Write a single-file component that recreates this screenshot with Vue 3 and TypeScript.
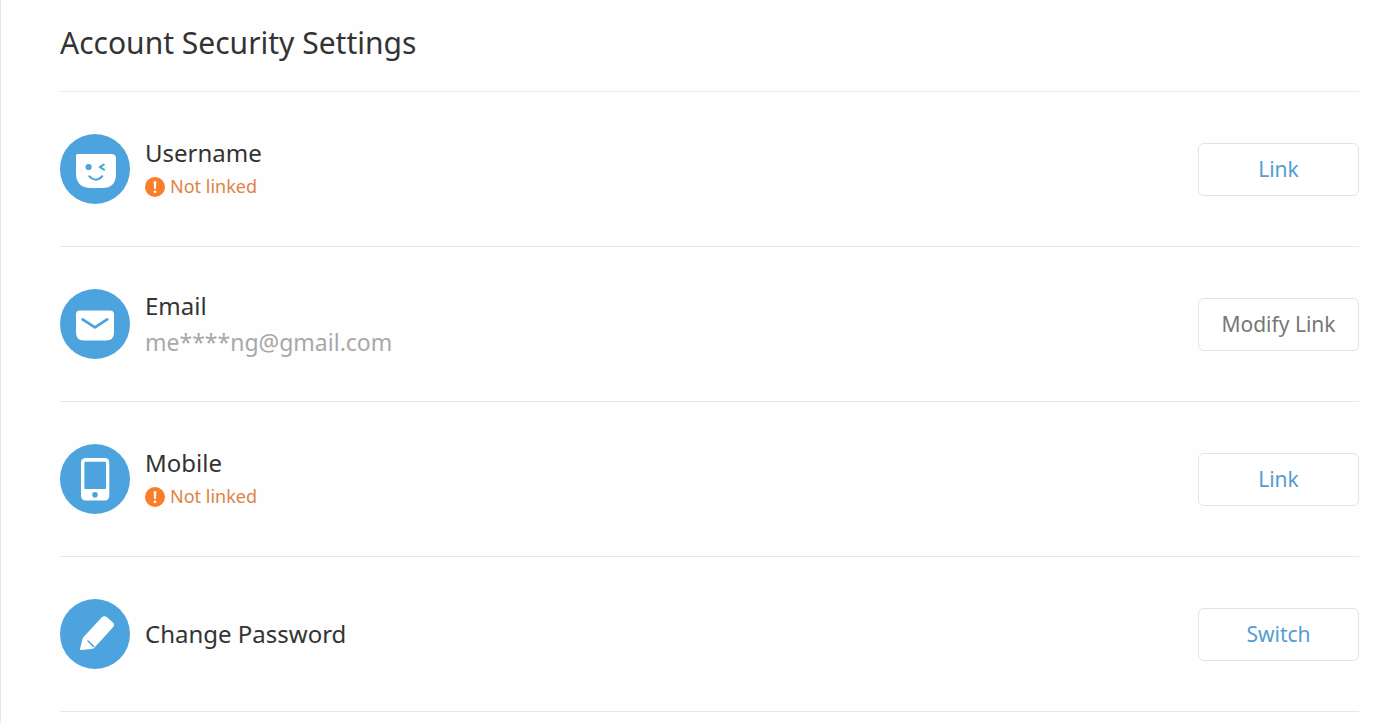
<script setup lang="ts">
type IconName = 'face' | 'mail' | 'phone' | 'pencil'

interface SecurityItem {
  icon: IconName
  title: string
  warning?: string
  detail?: string
  action: string
  muted?: boolean
}

const items: SecurityItem[] = [
  { icon: 'face', title: 'Username', warning: 'Not linked', action: 'Link' },
  { icon: 'mail', title: 'Email', detail: 'me****ng@gmail.com', action: 'Modify Link', muted: true },
  { icon: 'phone', title: 'Mobile', warning: 'Not linked', action: 'Link' },
  { icon: 'pencil', title: 'Change Password', action: 'Switch' },
]
</script>

<template>
  <main class="panel">
    <h1 class="heading">Account Security Settings</h1>
    <ul class="list">
      <li v-for="item in items" :key="item.title" class="row">
        <svg class="icon" viewBox="0 0 70 70" aria-hidden="true">
          <circle class="blue" cx="35" cy="35" r="35" />
          <template v-if="item.icon === 'face'">
            <path class="white" d="M17.5 20H51.5Q56 20 56 24.5V40Q56 54 42 54H31Q16 54 16 39V21.5Q16 20 17.5 20Z" />
            <circle class="blue" cx="28.6" cy="33" r="3.1" />
            <path class="line face-line" d="M43.8 30.6L39.8 33.1L44 35.7M29.2 42.2Q35.6 49.2 42.2 42.2" />
          </template>
          <template v-else-if="item.icon === 'mail'">
            <path class="white" d="M20 21.5H50Q54 21.5 54 25.5V43.5Q54 51.5 46 51.5H24Q16 51.5 16 43.5V25.5Q16 21.5 20 21.5Z" />
            <path class="line mail-line" d="M22.6 30.4L34.9 38.4L47.2 30.4" />
          </template>
          <template v-else-if="item.icon === 'phone'">
            <rect class="white" x="21" y="14" width="28.3" height="42.5" rx="4.5" />
            <rect class="blue" x="24.4" y="17.8" width="21.6" height="27.2" rx="1" />
            <circle class="blue" cx="35" cy="50.8" r="2.8" />
          </template>
          <template v-else>
            <path class="white" d="M20.8 51Q19.8 51 20 50L22.4 40.2Q22.7 39 23.6 38.1L41.6 18.6Q44.4 16 47.2 18.4L53 23.6Q55.2 26 52.8 28.6L34.6 48.6Q33.4 49.8 31.8 50Z" />
            <path class="line pencil-line" d="M28 42L33.6 47.4" />
          </template>
        </svg>
        <div class="info" :class="{ roomy: item.detail }">
          <h2 class="title">{{ item.title }}</h2>
          <p v-if="item.warning" class="warning">
            <svg class="alert" viewBox="0 0 20 20" aria-hidden="true">
              <circle class="orange" cx="10" cy="10" r="10" />
              <path class="white" d="M8.6 4.2H11.4L10.9 12H9.1Z" />
              <circle class="white" cx="10" cy="14.8" r="1.4" />
            </svg>
            <span>{{ item.warning }}</span>
          </p>
          <p v-if="item.detail" class="detail">{{ item.detail }}</p>
        </div>
        <button type="button" class="action" :class="{ muted: item.muted }">{{ item.action }}</button>
      </li>
    </ul>
  </main>
</template>

<style>
body {
  margin: 0;
  background: #fefefe;
}
</style>

<style scoped>
.panel {
  min-height: 100vh;
  box-sizing: border-box;
  padding: 0 41px 0 59px;
  border-left: 1px solid #e6e6e6;
  font-family: "Noto Sans", "Open Sans", sans-serif;
  color: #333;
}

.heading {
  margin: 0;
  padding: 23px 0 28px;
  border-bottom: 1px solid #ebebeb;
  font-size: 30px;
  font-weight: 400;
  line-height: 40px;
}

.list {
  margin: 0;
  padding: 0;
  list-style: none;
}

.row {
  display: flex;
  align-items: center;
  gap: 15px;
  padding: 41px 0;
  border-bottom: 1px solid #e6e6e6;
}

.icon {
  flex: none;
  width: 70px;
  height: 72px;
}

.blue {
  fill: #4ca3dd;
}

.white {
  fill: #fff;
}

.orange {
  fill: #fa7d28;
}

.line {
  fill: none;
  stroke: #4ca3dd;
  stroke-linecap: round;
  stroke-linejoin: round;
}

.face-line {
  stroke-width: 2;
}

.mail-line {
  stroke-width: 2.8;
}

.pencil-line {
  stroke-width: 1.5;
}

.info {
  flex: 1;
  min-width: 0;
}

.title {
  margin: 0;
  font-size: 24px;
  font-weight: 400;
  line-height: 34px;
}

.warning {
  display: flex;
  align-items: center;
  gap: 5px;
  margin: 0;
  color: #e08244;
  font-size: 18px;
  line-height: 32px;
}

.alert {
  width: 20px;
  height: 20px;
  margin-top: 2px;
}

.detail {
  margin: 0;
  color: #a8a8a8;
  font-size: 23px;
}

.roomy .title,
.roomy .detail {
  line-height: 36px;
}

.action {
  flex: none;
  width: 161px;
  height: 53px;
  padding: 0;
  border: 1px solid #e3e3e3;
  border-radius: 6px;
  background: #fff;
  color: #539dd2;
  font: inherit;
  font-size: 21px;
  cursor: pointer;
}

.action.muted {
  color: #777;
}
</style>
